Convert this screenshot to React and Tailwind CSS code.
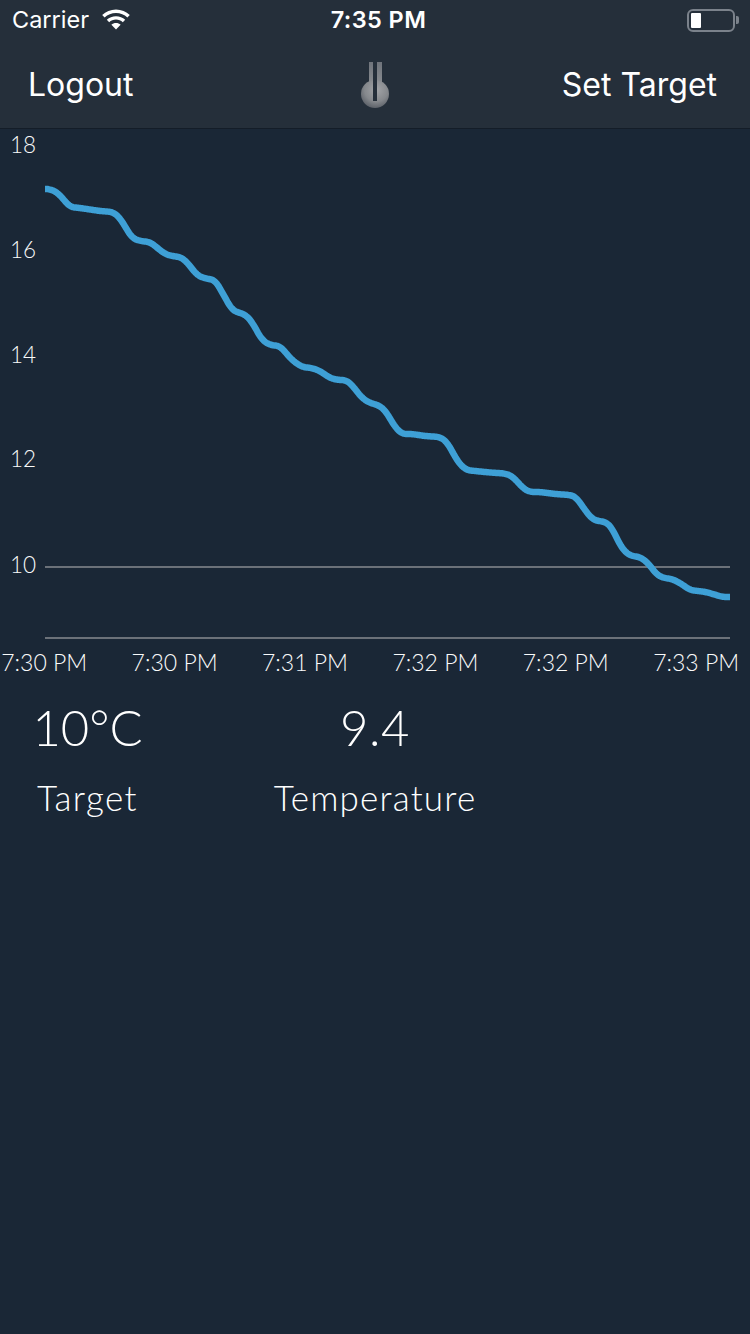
const raw = [[45,189],[50,189],[58,193],[70,207],[80,208],[100,211],[113,212],[120,218],[132,238],[140,241],[150,242],[165,254],[172,256],[180,257],[185,260],[198,276],[208,279],[215,280],[222,292],[232,310],[240,313],[246,315],[252,322],[262,340],[270,345],[280,346],[292,360],[302,367],[312,368],[320,371],[330,378],[338,380],[346,380],[352,385],[362,398],[370,403],[378,405],[385,410],[395,427],[402,434],[412,434],[425,436],[440,437],[447,442],[458,462],[466,470],[475,471],[490,472.5],[505,473.5],[512,476],[524,489],[530,492],[540,492],[555,494],[570,495],[576,497],[585,510],[592,519],[598,521],[606,522],[612,528],[620,545],[626,553],[632,556],[640,557],[648,563],[657,575],[664,578],[672,579],[680,583],[690,590],[698,591],[706,592],[716,595],[723,597],[730,597]];

function curve(p) {
  const ys = [];
  let j = 0;
  for (let x = 45; x <= 730; x++) {
    while (j < p.length - 2 && p[j + 1][0] < x) j++;
    const [x0, y0] = p[j], [x1, y1] = p[j + 1];
    ys.push(y0 + ((y1 - y0) * (x - x0)) / (x1 - x0));
  }
  const out = ys.map((_, i) => {
    const w = Math.min(4, i, ys.length - 1 - i);
    let s = 0;
    for (let k = i - w; k <= i + w; k++) s += ys[k];
    return s / (2 * w + 1);
  });
  return "M" + out.map((y, i) => `${45 + i} ${y.toFixed(2)}`).join("L");
}

const lato = { fontFamily: "Lato, sans-serif" };

function Wifi() {
  return (
    <svg width="30" height="22" viewBox="0 0 30 22" className="ml-[12px]">
      <g fill="#fff">
        <path d="M15 0.5C9.6 0.5 4.8 2.6 1.2 6l2.4 2.5C6.6 5.7 10.6 4 15 4s8.4 1.7 11.4 4.5L28.8 6C25.2 2.6 20.4 0.5 15 0.5z" />
        <path d="M15 7.2c-3.5 0-6.8 1.4-9.2 3.5l2.4 2.5c1.8-1.6 4.2-2.6 6.8-2.6s5 1 6.8 2.6l2.4-2.5C21.8 8.6 18.5 7.2 15 7.2z" />
        <path d="M15 14c-1.8 0-3.4.7-4.6 1.7L15 20.6l4.6-4.9C18.4 14.7 16.8 14 15 14z" />
      </g>
    </svg>
  );
}

function Battery() {
  return (
    <div className="flex items-center">
      <div className="w-[48px] h-[23px] rounded-[6px] border-2 border-[#7b828b] p-[2px]">
        <div className="w-[10px] h-full rounded-[1px] bg-white" />
      </div>
      <div className="w-[3px] h-[8px] ml-[1px] rounded-r-[2px] bg-[#7b828b]" />
    </div>
  );
}

function Thermo() {
  return (
    <svg width="32" height="50" viewBox="0 0 32 50">
      <defs>
        <radialGradient id="bulb" cx="0.55" cy="0.35" r="0.7">
          <stop offset="0" stopColor="#a3a5a8" />
          <stop offset="0.6" stopColor="#85888c" />
          <stop offset="1" stopColor="#565b63" />
        </radialGradient>
        <linearGradient id="stem" x1="0" y1="0" x2="0" y2="1">
          <stop offset="0" stopColor="#6f747b" />
          <stop offset="1" stopColor="#8b8e92" />
        </linearGradient>
      </defs>
      <rect x="9" y="0" width="13" height="24" fill="url(#stem)" />
      <circle cx="15" cy="32" r="14" fill="url(#bulb)" />
      <rect x="13" y="0" width="4" height="39" fill="#252f3a" />
    </svg>
  );
}

const xLabels = ["7:30 PM", "7:30 PM", "7:31 PM", "7:32 PM", "7:32 PM", "7:33 PM"];
const yLabels = [["18", 153], ["16", 258], ["14", 363], ["12", 467], ["10", 573]];

export default function App() {
  return (
    <div className="w-[750px] h-[1334px] overflow-hidden bg-[#1a2736] text-white flex flex-col">
      <header className="h-[129px] shrink-0 bg-[#252f3a] border-b border-[#141d28] flex flex-col" style={{ fontFamily: "Inter, sans-serif" }}>
        <div className="h-[40px] shrink-0 grid grid-cols-3 items-center pl-[12px] pr-[11px]">
          <div className="flex items-center text-[23.5px] leading-none">
            <span>Carrier</span>
            <Wifi />
          </div>
          <div className="text-center text-[23.5px] font-semibold leading-none tracking-[0.4px] pl-[6px]">7:35 PM</div>
          <div className="flex justify-end"><Battery /></div>
        </div>
        <div className="flex-1 grid grid-cols-3 items-center pl-[28px] pr-[33px] pt-[2px]">
          <span className="text-[32px] leading-none">Logout</span>
          <div className="flex justify-center mt-[3px] ml-[8px]"><Thermo /></div>
          <span className="text-[32px] leading-none text-right whitespace-nowrap">Set Target</span>
        </div>
      </header>

      <svg width="750" height="520" viewBox="0 129 750 520" className="shrink-0">
        {yLabels.map(([t, y]) => (
          <text key={t} x="10" y={y} fill="#f8f9f9" fontSize="22.5" fontWeight="300" style={lato}>{t}</text>
        ))}
        <line x1="45" x2="730" y1="567" y2="567" stroke="#6b7179" strokeWidth="2" />
        <line x1="45" x2="730" y1="638" y2="638" stroke="#6b7179" strokeWidth="2" />
        <path d={curve(raw)} fill="none" stroke="#3ea0d6" strokeWidth="6.5" strokeLinejoin="round" />
      </svg>

      <div className="flex ml-[-21px] w-[784px] text-[23px] font-light leading-none text-[#fafbfb] mt-[2px]" style={lato}>
        {xLabels.map((t, i) => (
          <div key={i} className="w-[130.4px] shrink-0 text-center whitespace-nowrap">{t}</div>
        ))}
      </div>

      <div className="flex mt-[22px] font-light" style={lato}>
        <div className="w-[175px] flex flex-col items-center">
          <div className="text-[49px] leading-[62px]">10°C</div>
          <div className="text-[35px] leading-[42px] mt-[18px] tracking-[1.4px]">Target</div>
        </div>
        <div className="w-[400px] flex flex-col items-center">
          <div className="text-[49px] leading-[62px] tracking-[0.5px]">9.4</div>
          <div className="text-[35px] leading-[42px] mt-[18px] tracking-[1.2px]">Temperature</div>
        </div>
      </div>
    </div>
  );
}
